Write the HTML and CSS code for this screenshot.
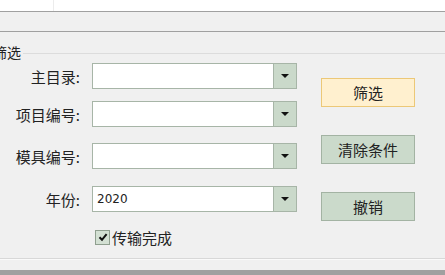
FILE: index.html
```html
<!DOCTYPE html>
<html>
<head>
  <title>筛选</title>
  <link rel="stylesheet" href="styles.css">
</head>
<body>
  <div class="topbar">
    <div class="topcell"></div>
  </div>
  <div class="toolband"></div>
  <div class="group">
    <div class="group-title"><span>筛选</span></div>
    <div class="group-body">
      <div class="fields">
        <div class="row">
          <label class="label">主目录:</label>
          <div class="combo"><div class="combo-text"></div><div class="combo-btn"><span class="arrow"></span></div></div>
        </div>
        <div class="row">
          <label class="label">项目编号:</label>
          <div class="combo"><div class="combo-text"></div><div class="combo-btn"><span class="arrow"></span></div></div>
        </div>
        <div class="row row-wide">
          <label class="label">模具编号:</label>
          <div class="combo"><div class="combo-text"></div><div class="combo-btn"><span class="arrow"></span></div></div>
        </div>
        <div class="row row-wide">
          <label class="label">年份:</label>
          <div class="combo"><div class="combo-text">2020</div><div class="combo-btn"><span class="arrow"></span></div></div>
        </div>
        <div class="check-row">
          <span class="checkbox">
            <svg width="10" height="10" viewBox="0 0 10 10"><path d="M1.5 5.2 L4 7.8 L8.6 2.2" fill="none" stroke="#111" stroke-width="2"/></svg>
          </span>
          <span class="check-label">传输完成</span>
        </div>
      </div>
      <div class="actions">
        <button class="btn btn-primary">筛选</button>
        <button class="btn">清除条件</button>
        <button class="btn">撤销</button>
      </div>
    </div>
  </div>
  <div class="spacer"></div>
  <div class="statusbar"></div>
</body>
</html>
```

FILE: styles.css
```css
html, body {
  margin: 0;
  padding: 0;
}
body {
  width: 445px;
  height: 275px;
  overflow: hidden;
  background-color: #f0f0f0;
  font-family: "Noto Sans CJK SC", "DejaVu Sans", sans-serif;
  color: #222;
  display: flex;
  flex-direction: column;
}
.topbar {
  height: 11px;
  background-color: #fff;
  border-bottom: 1px solid #a0a0a0;
  flex-shrink: 0;
}
.topcell {
  width: 53px;
  height: 11px;
  border-right: 1px solid #ececec;
}
.toolband {
  height: 19px;
  border-bottom: 1px solid #a0a0a0;
  flex-shrink: 0;
}
.group {
  border-bottom: 1px solid #d8d8d8;
  box-shadow: 0 1px 0 #fafafa;
  padding-bottom: 12px;
  flex-shrink: 0;
}
.group-title {
  display: flex;
  align-items: center;
  margin-top: 11px;
  height: 18px;
  font-size: 14px;
  line-height: 18px;
}
.group-title span {
  margin-left: -7px;
  padding-right: 2px;
}
.group-title::after {
  content: "";
  flex: 1;
  border-top: 1px solid #dcdcdc;
  margin-top: 2px;
}
.group-body {
  display: flex;
  margin-top: 2px;
}
.fields {
  display: flex;
  flex-direction: column;
  gap: 12px;
}
.row {
  display: flex;
  align-items: center;
  height: 26px;
}
.row-wide {
  margin-top: 4px;
}
.row-wide + .row-wide {
  margin-top: 5px;
}
.label {
  width: 80px;
  margin-right: 12px;
  text-align: right;
  font-size: 15px;
}
.combo {
  display: flex;
  width: 205px;
  height: 26px;
  box-sizing: border-box;
  border: 1px solid #a7b5a7;
  background-color: #fff;
}
.combo-text {
  flex: 1;
  padding-left: 4px;
  font-family: "DejaVu Sans", sans-serif;
  font-size: 12px;
  line-height: 24px;
  color: #222;
}
.combo-btn {
  width: 22px;
  background-color: #cad9ca;
  border-left: 1px solid #a7b5a7;
  display: flex;
  align-items: center;
  justify-content: center;
}
.arrow {
  width: 0;
  height: 0;
  border-left: 4px solid transparent;
  border-right: 4px solid transparent;
  border-top: 4px solid #111;
}
.check-row {
  display: flex;
  align-items: center;
  height: 18px;
  margin-top: 4px;
  padding-left: 95px;
}
.checkbox {
  width: 13px;
  height: 13px;
  border: 1px solid #8f9f8f;
  background-color: #d3e0d3;
  display: flex;
  align-items: center;
  justify-content: center;
  margin-right: 2px;
}
.check-label {
  font-size: 15px;
}
.actions {
  display: flex;
  flex-direction: column;
  gap: 28px;
  margin-left: 24px;
  padding-top: 15px;
}
.btn {
  width: 94px;
  height: 29px;
  box-sizing: border-box;
  border: 1px solid #a3b3a3;
  background-color: #cbdacb;
  font-family: "Noto Sans CJK SC", sans-serif;
  font-size: 15px;
  color: #222;
  padding: 0;
}
.btn-primary {
  background-color: #fff0cf;
  border-color: #ecc877;
}
.spacer {
  flex: 1;
}
.statusbar {
  height: 5px;
  background-color: #a0a0a0;
  flex-shrink: 0;
}
```
